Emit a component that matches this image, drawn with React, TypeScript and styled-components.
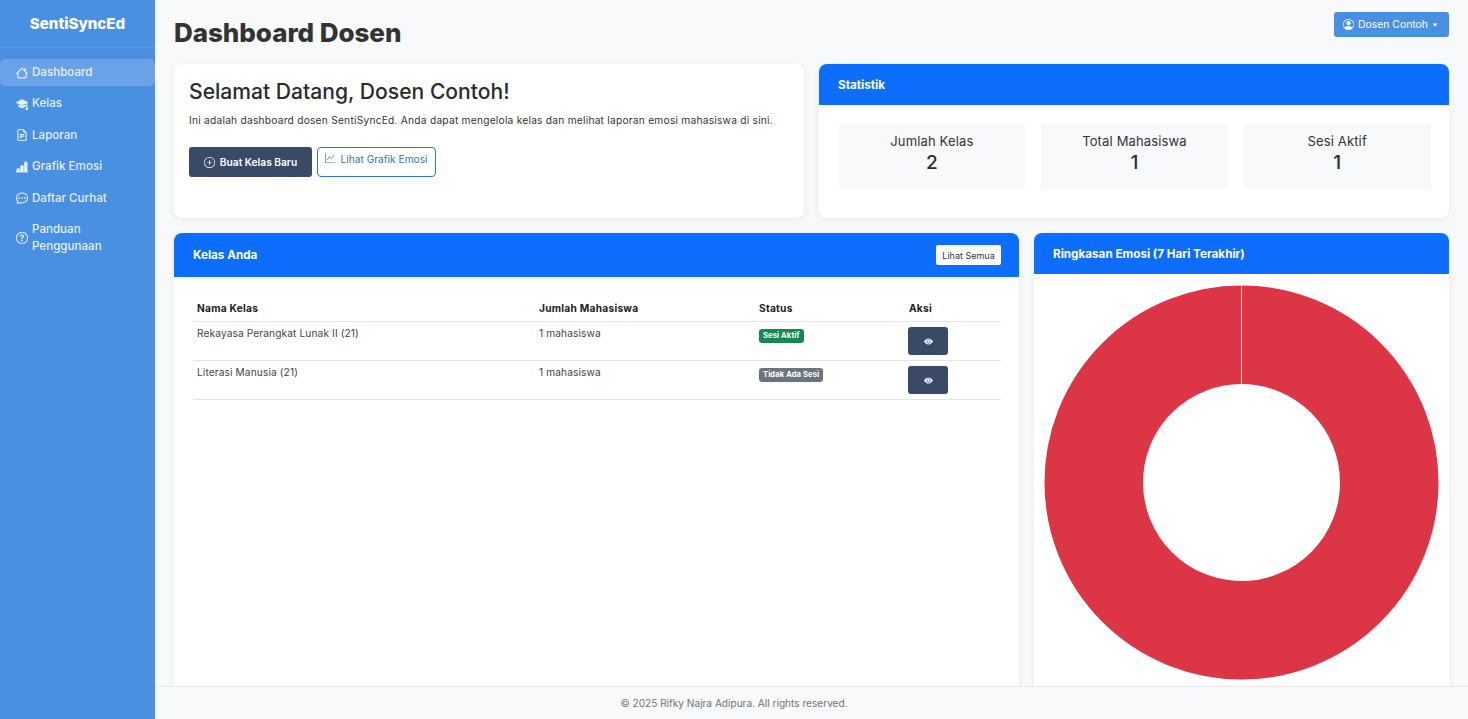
import React from 'react';
import styled, { createGlobalStyle } from 'styled-components';
import {
  BsBarChartLineFill,
  BsCaretDownFill,
  BsChatDots,
  BsEyeFill,
  BsFileEarmarkText,
  BsGraphUp,
  BsHouse,
  BsMortarboardFill,
  BsPersonCircle,
  BsPlusCircle,
  BsQuestionCircle,
} from 'react-icons/bs';

const GlobalStyle = createGlobalStyle`
  html, body {
    margin: 0;
    height: 100%;
    overflow: hidden;
    background: #f8f9fa;
    font-family: Inter, "Open Sans", sans-serif;
    color: #333;
  }
  * { box-sizing: border-box; }
`;

const Shell = styled.div`
  display: flex;
  width: 1468px;
  height: 719px;
  overflow: hidden;
`;

const Sidebar = styled.aside`
  position: relative;
  z-index: 2;
  flex: 0 0 155px;
  background: #4a90e2;
  color: #fff;
`;

const Brand = styled.div`
  height: 48px;
  padding-top: 13px;
  text-align: center;
  font-size: 15.1px;
  line-height: 22px;
  font-weight: 800;
  border-bottom: 1px solid rgba(255, 255, 255, 0.1);
`;

const Nav = styled.nav`
  display: flex;
  flex-direction: column;
  gap: 4.4px;
  padding-top: 11px;
`;

const NavItem = styled.a<{ $active?: boolean }>`
  display: flex;
  align-items: center;
  gap: 4.5px;
  padding: 5px 10px 5px 15.5px;
  border-radius: 5px;
  font-size: 11.6px;
  line-height: 17px;
  font-weight: 500;
  color: rgba(255, 255, 255, 0.88);
  background: ${p => (p.$active ? 'rgba(255,255,255,0.17)' : 'transparent')};
  svg {
    flex: 0 0 12px;
    width: 12px;
    height: 12px;
    stroke: currentColor;
    stroke-width: 0.4px;
  }
`;

const Main = styled.main`
  flex: 1;
  min-width: 0;
  padding: 12px 19px 0;
`;

const TopBar = styled.header`
  display: flex;
  justify-content: space-between;
  align-items: flex-start;
  height: 52px;
`;

const Title = styled.h1`
  margin: 6px 0 0;
  font-size: 26px;
  line-height: 30px;
  font-weight: 800;
  letter-spacing: -0.05px;
  color: #333;
`;

const UserButton = styled.button`
  display: flex;
  align-items: center;
  gap: 4px;
  width: 115px;
  height: 25px;
  padding: 0 6px 0 9px;
  border: 0;
  border-radius: 3px;
  background: #4a90e2;
  color: #fff;
  font: 400 10.4px Inter, sans-serif;
  white-space: nowrap;
  svg:first-child {
    flex: 0 0 11px;
    width: 11px;
    height: 11px;
  }
  svg:last-child {
    flex: 0 0 6px;
    width: 6px;
    height: 6px;
  }
`;

const TopGrid = styled.div`
  display: grid;
  grid-template-columns: 630px 630px;
  gap: 15px;
  margin-bottom: 15px;
`;

const BottomGrid = styled.div`
  display: grid;
  grid-template-columns: 845px 415px;
  gap: 15px;
`;

const Card = styled.section`
  background: #fff;
  border-radius: 8px;
  box-shadow: 0 2px 8px rgba(0, 0, 0, 0.06);
  overflow: hidden;
`;

const WelcomeCard = styled(Card)`
  height: 154px;
  padding: 15px;
`;

const Greeting = styled.h2`
  margin: 0;
  font-size: 21.1px;
  line-height: 25px;
  font-weight: 500;
  color: #2b2b2b;
`;

const Lead = styled.p`
  margin: 7px 0 0;
  font-size: 10.2px;
  line-height: 18px;
  letter-spacing: 0.24px;
  color: #333;
  white-space: nowrap;
`;

const Actions = styled.div`
  display: flex;
  align-items: flex-start;
  gap: 5px;
  margin-top: 18px;
`;

const PrimaryButton = styled.button`
  display: flex;
  align-items: center;
  justify-content: center;
  gap: 5px;
  width: 123px;
  height: 30px;
  border: 0;
  border-radius: 3px;
  background: #394a66;
  color: #fff;
  font: 600 10.2px Inter, sans-serif;
  svg {
    width: 11px;
    height: 11px;
  }
`;

const OutlineButton = styled.button`
  display: flex;
  align-items: flex-start;
  justify-content: center;
  gap: 5px;
  width: 119px;
  height: 30px;
  padding-top: 5px;
  border: 1px solid #2f76c9;
  border-radius: 4px;
  background: #fff;
  color: #2f76c9;
  font: 400 10.2px/12px Inter, sans-serif;
  svg {
    flex: 0 0 10px;
    width: 10px;
    height: 10px;
  }
`;

const CardHeader = styled.div<{ $height: number }>`
  display: flex;
  align-items: center;
  justify-content: space-between;
  height: ${p => p.$height}px;
  padding: 0 18px 0 19px;
  background: #0d6efd;
  color: #fff;
  font-size: 11.7px;
  font-weight: 700;
`;

const StatsBody = styled.div`
  display: grid;
  grid-template-columns: repeat(3, 1fr);
  gap: 15px;
  height: 113px;
  padding: 19px 18px 19px 19px;
`;

const StatBox = styled.div`
  height: 65px;
  padding-top: 9px;
  border-radius: 4px;
  background: #f8f9fa;
  text-align: center;
`;

const StatLabel = styled.div`
  font-size: 13px;
  line-height: 16px;
  letter-spacing: 0.15px;
  font-weight: 400;
  color: #333;
`;

const StatValue = styled.div`
  margin-top: 2px;
  font-size: 19px;
  line-height: 24px;
  font-weight: 500;
  color: #2b2b2b;
`;

const ClassCard = styled(Card)`
  height: 480px;
`;

const SmallButton = styled.button`
  width: 65px;
  height: 20px;
  padding: 0;
  border: 0;
  border-radius: 2px;
  background: #fff;
  color: #333;
  font: 400 9px Inter, sans-serif;
`;

const TableWrap = styled.div`
  padding: 19px;
`;

const Table = styled.table`
  width: 808px;
  border-collapse: collapse;
  table-layout: fixed;
  font-size: 10.2px;
  letter-spacing: 0.1px;
  th,
  td {
    padding: 5px 4px;
    text-align: left;
    vertical-align: top;
    border-bottom: 1px solid #e4e6e9;
  }
  th {
    height: 25px;
    line-height: 15px;
    font-weight: 700;
    letter-spacing: 0.25px;
    color: #222;
  }
  td {
    height: 39px;
    line-height: 13px;
    color: #444;
  }
`;

const Badge = styled.span<{ $tone: 'green' | 'gray' }>`
  display: inline-block;
  height: 14px;
  margin-top: 2px;
  padding: 0 4px;
  border-radius: 3px;
  background: ${p => (p.$tone === 'green' ? '#198754' : '#6c757d')};
  color: #fff;
  font-size: 7.6px;
  line-height: 14px;
  font-weight: 700;
  vertical-align: top;
`;

const ViewButton = styled.button`
  display: flex;
  align-items: center;
  justify-content: center;
  width: 40px;
  height: 28px;
  margin-left: -1px;
  border: 0;
  border-radius: 3px;
  background: #394a66;
  color: #eef1f5;
  svg {
    width: 9px;
    height: 9px;
  }
`;

const ChartCard = styled(Card)`
  height: 480px;
`;

const ChartArea = styled.div`
  display: flex;
  justify-content: center;
  padding-top: 11px;
`;

const Footer = styled.footer`
  position: fixed;
  left: 0;
  right: 0;
  bottom: 0;
  z-index: 1;
  height: 33px;
  border-top: 1px solid #e6e8ea;
  background: #f8f9fa;
  color: #6c757d;
  font-size: 10.1px;
  line-height: 32px;
  text-align: center;
`;

const navItems = [
  { label: 'Dashboard', icon: <BsHouse />, active: true },
  { label: 'Kelas', icon: <BsMortarboardFill /> },
  { label: 'Laporan', icon: <BsFileEarmarkText /> },
  { label: 'Grafik Emosi', icon: <BsBarChartLineFill /> },
  { label: 'Daftar Curhat', icon: <BsChatDots /> },
  { label: 'Panduan Penggunaan', icon: <BsQuestionCircle /> },
];

const stats = [
  { label: 'Jumlah Kelas', value: 2 },
  { label: 'Total Mahasiswa', value: 1 },
  { label: 'Sesi Aktif', value: 1 },
];

const classes = [
  { name: 'Rekayasa Perangkat Lunak II (21)', count: '1 mahasiswa', status: 'Sesi Aktif', tone: 'green' as const },
  { name: 'Literasi Manusia (21)', count: '1 mahasiswa', status: 'Tidak Ada Sesi', tone: 'gray' as const },
];

function App() {
  return (
    <Shell>
      <GlobalStyle />
      <Sidebar>
        <Brand>SentiSyncEd</Brand>
        <Nav>
          {navItems.map(item => (
            <NavItem key={item.label} $active={item.active}>
              {item.icon}
              <span>{item.label}</span>
            </NavItem>
          ))}
        </Nav>
      </Sidebar>
      <Main>
        <TopBar>
          <Title>Dashboard Dosen</Title>
          <UserButton>
            <BsPersonCircle />
            Dosen Contoh
            <BsCaretDownFill />
          </UserButton>
        </TopBar>
        <TopGrid>
          <WelcomeCard>
            <Greeting>Selamat Datang, Dosen Contoh!</Greeting>
            <Lead>
              Ini adalah dashboard dosen SentiSyncEd. Anda dapat mengelola kelas dan melihat laporan emosi mahasiswa di sini.
            </Lead>
            <Actions>
              <PrimaryButton>
                <BsPlusCircle />
                Buat Kelas Baru
              </PrimaryButton>
              <OutlineButton>
                <BsGraphUp />
                Lihat Grafik Emosi
              </OutlineButton>
            </Actions>
          </WelcomeCard>
          <Card>
            <CardHeader $height={41}>Statistik</CardHeader>
            <StatsBody>
              {stats.map(stat => (
                <StatBox key={stat.label}>
                  <StatLabel>{stat.label}</StatLabel>
                  <StatValue>{stat.value}</StatValue>
                </StatBox>
              ))}
            </StatsBody>
          </Card>
        </TopGrid>
        <BottomGrid>
          <ClassCard>
            <CardHeader $height={44}>
              Kelas Anda
              <SmallButton>Lihat Semua</SmallButton>
            </CardHeader>
            <TableWrap>
              <Table>
                <colgroup>
                  <col width={342} />
                  <col width={220} />
                  <col width={150} />
                  <col width={96} />
                </colgroup>
                <thead>
                  <tr>
                    <th>Nama Kelas</th>
                    <th>Jumlah Mahasiswa</th>
                    <th>Status</th>
                    <th>Aksi</th>
                  </tr>
                </thead>
                <tbody>
                  {classes.map(row => (
                    <tr key={row.name}>
                      <td>{row.name}</td>
                      <td>{row.count}</td>
                      <td>
                        <Badge $tone={row.tone}>{row.status}</Badge>
                      </td>
                      <td>
                        <ViewButton>
                          <BsEyeFill />
                        </ViewButton>
                      </td>
                    </tr>
                  ))}
                </tbody>
              </Table>
            </TableWrap>
          </ClassCard>
          <ChartCard>
            <CardHeader $height={41}>Ringkasan Emosi (7 Hari Terakhir)</CardHeader>
            <ChartArea>
              <svg width="395" height="395" viewBox="0 0 395 395">
                <circle cx="197.5" cy="197.5" r="147.75" fill="none" stroke="#dc3545" strokeWidth="98.5" />
                <line x1="197.5" y1="0" x2="197.5" y2="99" stroke="#fff" strokeOpacity="0.65" strokeWidth="1.2" />
              </svg>
            </ChartArea>
          </ChartCard>
        </BottomGrid>
      </Main>
      <Footer>© 2025 Rifky Najra Adipura. All rights reserved.</Footer>
    </Shell>
  );
}

export default App;
